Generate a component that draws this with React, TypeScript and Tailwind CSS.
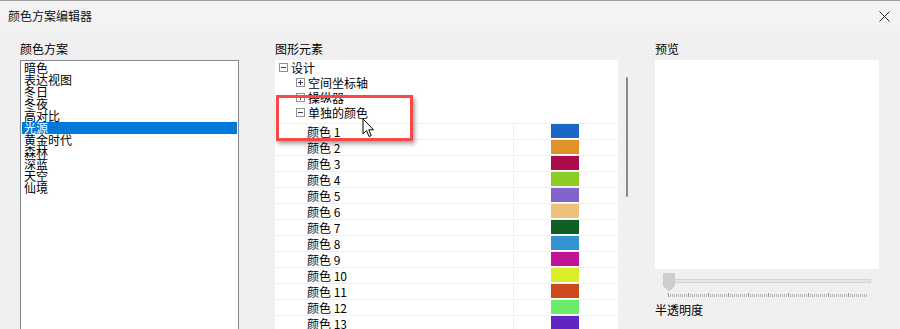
import React from "react";

const FONT = { fontFamily: '"Noto Sans CJK SC", "Noto Sans", sans-serif' };

const schemes = ["暗色", "表达视图", "冬日", "冬夜", "高对比", "光源", "黄金时代", "森林", "深蓝", "天空", "仙境"];
const colors = [
  "#1b67c8", "#e0922a", "#ab0c4b", "#8ccd23", "#8163cc", "#ecc07a", "#0f5e26",
  "#3295d2", "#c01396", "#dbef28", "#cc4a1c", "#6aeb6a", "#6026c0",
];

function ExpBox({ plus }: { plus?: boolean }) {
  return (
    <svg width="9" height="9" viewBox="0 0 9 9" className="shrink-0">
      <rect x="0.5" y="0.5" width="8" height="8" fill="#fff" stroke="#919191" />
      <line x1="2" y1="4.5" x2="7" y2="4.5" stroke="#2b3d5c" />
      {plus && <line x1="4.5" y1="2" x2="4.5" y2="7" stroke="#2b3d5c" />}
    </svg>
  );
}

function Cursor() {
  return (
    <svg width="14" height="21" viewBox="0 0 14 21" className="absolute left-[362px] top-[118px]">
      <path d="M1 1 L1 16 L4.5 12.5 L7 18.5 L9.2 17.6 L6.8 11.8 L11.5 11.8 Z" fill="#fff" stroke="#000" strokeWidth="1" strokeLinejoin="round" />
    </svg>
  );
}

function Ticks() {
  const lines = [];
  for (let x = 668; x <= 866; x += 2) {
    const big = (x - 668) % 20 === 0;
    lines.push(<line key={x} x1={x - 663 + 0.5} y1={big ? 0 : 1} x2={x - 663 + 0.5} y2={4} stroke={big ? "#9a9a9a" : "#b8b8b8"} />);
  }
  return (
    <svg width="210" height="5" className="block">
      {lines}
    </svg>
  );
}

export default function App() {
  return (
    <div className="relative w-[900px] h-[329px] overflow-hidden bg-[#f0f0f0] text-black" style={FONT}>
      {/* title bar */}
      <div className="h-[31px] border-t border-[#a0a0a0] bg-[#f3f3f3] flex items-center justify-between pl-[8px] pr-[10px]">
        <span className="text-[12px] leading-[14px] text-[#111]">颜色方案编辑器</span>
        <svg width="11" height="11" viewBox="0 0 11 11">
          <path d="M0.5 0.5 L10.5 10.5 M10.5 0.5 L0.5 10.5" stroke="#222" strokeWidth="1" />
        </svg>
      </div>

      {/* body */}
      <div className="flex pl-[20px] pt-[11px] h-[298px]">
        {/* left */}
        <div className="w-[219px] flex flex-col">
          <div className="text-[12px] leading-[14px] h-[14px] mb-[4px]">颜色方案</div>
          <div className="flex-1 bg-white border-t border-l border-r border-[#828790] p-[1px]">
            {schemes.map((s, i) => (
              <div
                key={s}
                className={`h-[12px] leading-[12px] text-[12px] pl-[2px] ${i === 5 ? "bg-[#0078d7] text-white" : ""}`}
              >
                {s}
              </div>
            ))}
          </div>
        </div>

        {/* middle */}
        <div className="ml-[36px] w-[362px] flex flex-col">
          <div className="text-[12px] leading-[14px] h-[14px] mb-[4px]">图形元素</div>
          <div className="flex flex-1">
            <div className="w-[343px] bg-white flex flex-col text-[12px]">
              <div className="h-[15px] flex items-center gap-[3px] pl-[4px]">
                <ExpBox />
                <span className="leading-[15px]">设计</span>
              </div>
              <div className="h-[15px] flex items-center gap-[3px] pl-[21px]">
                <ExpBox plus />
                <span className="leading-[15px]">空间坐标轴</span>
              </div>
              <div className="h-[15px] flex items-center gap-[3px] pl-[21px]">
                <ExpBox plus />
                <span className="leading-[15px]">操纵器</span>
              </div>
              <div className="h-[15px] flex items-center gap-[3px] pl-[21px]">
                <ExpBox />
                <span className="leading-[15px]">单独的颜色</span>
              </div>
              <div className="h-[3px]" />
              {colors.map((c, i) => (
                <div key={c} className="flex h-[16px] border-t border-[#f0f0f0]">
                  <div className="w-[239px] border-r border-[#f0f0f0] pl-[32px] leading-[15px] text-[12px]">
                    颜色 {i + 1}
                  </div>
                  <div className="flex-1 pl-[37px] pt-[0px]">
                    <div className="w-[28px] h-[14px]" style={{ backgroundColor: c }} />
                  </div>
                </div>
              ))}
            </div>
            <div className="w-[19px] pl-[8px] pt-[17px]">
              <div className="w-[2px] h-[120px] bg-[#8a8a8a] rounded-full" />
            </div>
          </div>
        </div>

        {/* right */}
        <div className="ml-[18px] w-[224px] flex flex-col">
          <div className="text-[12px] leading-[14px] h-[14px] mb-[4px]">预览</div>
          <div className="h-[209px] bg-white" />
          <div className="relative h-[28px] mt-[4px] pl-[8px]">
            <div className="absolute left-[19px] top-[6px] w-[197px] h-[4px] bg-[#e6e6e6] border border-[#d4d4d4]" />
            <svg width="12" height="19" viewBox="0 0 12 19" className="absolute left-[8px] top-0">
              <path d="M0 1 Q0 0 1 0 L11 0 Q12 0 12 1 L12 13 L6 18.5 L0 13 Z" fill="#cdcdcd" />
            </svg>
            <div className="absolute left-[8px] top-[20px]">
              <Ticks />
            </div>
          </div>
          <div className="text-[12px] leading-[14px] mt-[2px]">半透明度</div>
        </div>
      </div>

      {/* red highlight */}
      <div className="absolute left-[276px] top-[95px] w-[137px] h-[46px] border-[3px] border-[#f84848] shadow-[2px_3px_4px_rgba(0,0,0,0.35)]" />
      <Cursor />
    </div>
  );
}
